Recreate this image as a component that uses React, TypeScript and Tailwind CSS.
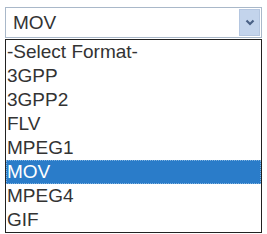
const options = ['-Select Format-', '3GPP', '3GPP2', 'FLV', 'MPEG1', 'MOV', 'MPEG4', 'GIF']

export default function App() {
  const selected = 'MOV'
  return (
    <div className="w-[267px] h-[234px] bg-white pt-[7px] px-[5px] font-['Liberation_Sans',Arial,sans-serif] text-[19px] text-[#333]">
      <div className="h-[31px] border border-[#a9b8c9] bg-white flex items-center justify-between pl-[7px] pr-[1px]">
        <span className="leading-none">{selected}</span>
        <div className="w-[21px] h-[27px] bg-[#c3d4ec] border border-[#b4c6e0] flex items-center justify-center">
          <svg width="10" height="7" viewBox="0 0 10 7">
            <path d="M1.5 1.5 L5 5 L8.5 1.5" fill="none" stroke="#4a6186" strokeWidth="2.2" />
          </svg>
        </div>
      </div>
      <div className="mt-[1px] border border-[#222] bg-white flex flex-col">
        {options.map(o => (
          <div
            key={o}
            className={
              o === selected
                ? 'h-[24px] leading-[24px] pl-[1px] bg-[#2a7cc9] text-white outline outline-1 outline-dotted outline-[#7fb2e0] -outline-offset-1'
                : 'h-[24px] leading-[24px] pl-[1px]'
            }
          >
            {o}
          </div>
        ))}
      </div>
    </div>
  )
}
